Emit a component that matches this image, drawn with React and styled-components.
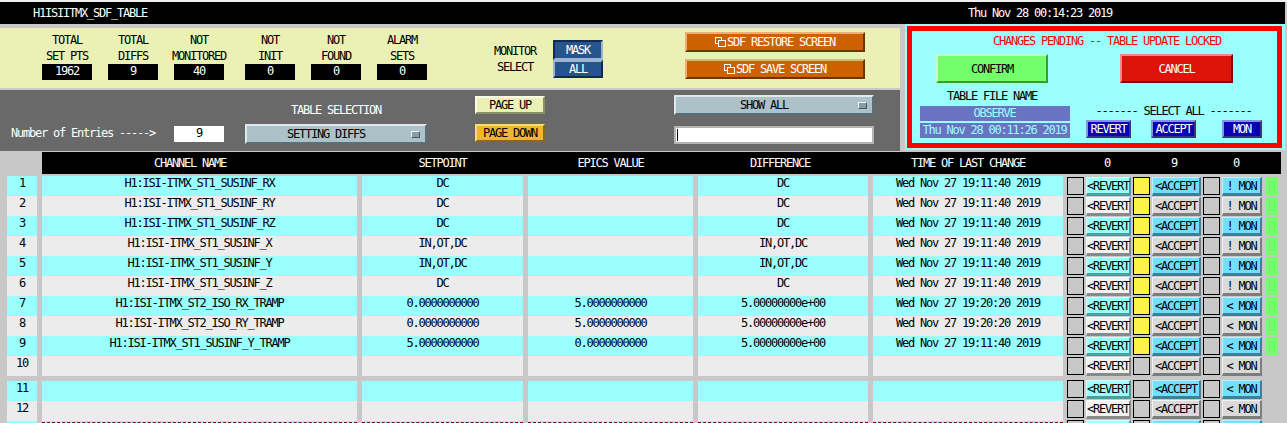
import React from "react";
import styled, { createGlobalStyle } from "styled-components";

const Global = createGlobalStyle`
  html, body { margin: 0; padding: 0; background: #c8c8c8; }
  body {
    width: 1287px; height: 423px; overflow: hidden;
    font-family: "DejaVu Sans Mono", "Liberation Mono", monospace;
    font-size: 12px; letter-spacing: -1.22px; line-height: 14px; color: #000;
  }
`;

const bevel = (lt, rb, w = 2) => `
  border-style: solid; border-width: ${w}px;
  border-color: ${lt} ${rb} ${rb} ${lt};
`;

const Page = styled.div`
  width: 1287px; height: 423px; overflow: hidden; box-sizing: border-box;
  padding-top: 2px;
  background: linear-gradient(#f0f0f0 2px, #c8c8c8 2px);
`;
const TitleBar = styled.div`
  width: 1285px; height: 22px; background: #000; color: #fff;
  display: grid; grid-template-columns: 33px 935px auto; align-items: center;
  box-sizing: border-box;
`;
const TitleText = styled.span`grid-column: 2;`;
const Clock = styled.span``;

const TopArea = styled.div`display: grid; grid-template-columns: 900px 5px 380px; height: 127px;`;
const LeftColumn = styled.div`display: flex; flex-direction: column; padding-top: 4px; box-sizing: border-box;`;
const Gutter = styled.div``;

const YellowPanel = styled.div`
  height: 60px; background: #ebf1b5; display: flex; align-items: flex-start;
  padding-left: 42px; box-sizing: border-box;
`;
const StatGroup = styled.div`display: flex; gap: 16px; margin-left: ${p => p.$ml || 0}px; padding-top: 5px;`;
const Stat = styled.div`width: 50px; display: flex; flex-direction: column; align-items: center; white-space: nowrap;`;
const StatLabel = styled.div`height: 16px; line-height: 15px;`;
const StatValue = styled.div`
  width: 50px; height: 16px; margin-top: -1px; background: #000; color: #fff;
  text-align: center; line-height: 15px;
`;
const MonitorWrap = styled.div`display: flex; margin-left: 66px; margin-top: 12px; gap: 16px;`;
const MonitorLabel = styled.div`width: 44px; text-align: center; line-height: 16px; padding-top: 3px;`;
const MaskStack = styled.div`display: flex; flex-direction: column; width: 50px;`;
const MaskButton = styled.div`
  height: ${p => p.$h}px; box-sizing: border-box; background: #27548d; color: #fff;
  display: flex; align-items: center; justify-content: center;
  ${p => p.$down ? bevel("#0f2b52", "#9db4d0") : bevel("#9db4d0", "#0f2b52")}
`;
const OrangeStack = styled.div`display: flex; flex-direction: column; gap: 7px; margin-left: 82px; margin-top: 4px;`;
const OrangeButton = styled.div`
  width: 180px; height: 20px; box-sizing: border-box; background: #cd6100; color: #fff;
  display: flex; align-items: center; justify-content: center;
  ${bevel("#eeb07a", "#6e3400")}
`;

const DarkPanel = styled.div`
  margin-top: 2px; height: 61px; background: #696969; box-sizing: border-box; color: #fff;
  display: grid; grid-template-columns: 11px 163px 50px 21px 182px 48px 70px 129px 200px;
  grid-template-rows: 6px 18px 10px 18px;
`;
const EntriesLabel = styled.div`grid-column: 2; grid-row: 4; white-space: nowrap; align-self: center;`;
const EntriesValue = styled.div`
  grid-column: 3; grid-row: 4; height: 16px; margin-top: 2px; background: #fff; color: #000;
  text-align: center; line-height: 15px;
`;
const TableLabel = styled.div`grid-column: 5; grid-row: 2 / 4; text-align: center; padding-top: 7px;`;
const Dropdown = styled.div`
  grid-column: ${p => p.$col}; grid-row: ${p => p.$row}; align-self: ${p => p.$top ? "start" : "stretch"};
  height: 20px; margin-top: ${p => p.$mt || 0}px; box-sizing: border-box; background: #adc1c8; color: #000;
  display: grid; grid-template-columns: 1fr 9px; align-items: center; column-gap: 6px; padding-right: 5px;
  ${bevel("#dfe8ec", "#5b6f78")}
  text-align: center;
`;
const DropMark = styled.span`
  display: block; width: 9px; height: 7px; box-sizing: border-box; background: #8a9ba2;
  ${bevel("#f0f4f5", "#4a5a60", 1)}
`;
const PageButton = styled.div`
  grid-column: 7; grid-row: ${p => p.$row}; height: 18px; box-sizing: border-box; color: #000;
  background: ${p => p.$bg}; display: flex; align-items: center; justify-content: center;
  ${p => bevel(p.$lt, p.$rb)}
`;
const TextField = styled.div`
  grid-column: 9; grid-row: 4; height: 18px; margin-top: 2px; box-sizing: border-box; background: #fff;
  border: 2px solid #b4b4b4; display: flex; align-items: center;
`;
const Caret = styled.span`display: block; width: 1px; height: 12px; margin-left: 1px; background: #000;`;

const CyanPanel = styled.div`background: #99ffff; padding: 2px 3px 2px 2px; box-sizing: border-box; height: 126px;`;
const RedBox = styled.div`
  border: 5px solid #fd0000; height: 122px; box-sizing: border-box;
  display: grid; grid-template-columns: 165px 1fr; grid-template-rows: 23px 29px 1fr;
`;
const Alert = styled.div`grid-column: 1 / 3; color: #fd0000; text-align: center; padding: 3px 0 0 25px;`;
const ActionButton = styled.div`
  justify-self: start; width: ${p => p.$w}px; margin-left: ${p => p.$ml}px; height: 29px; box-sizing: border-box;
  display: flex; align-items: center; justify-content: center;
  background: ${p => p.$bg}; color: ${p => p.$fg};
  ${p => bevel(p.$lt, p.$rb)}
`;
const FileBlock = styled.div`display: flex; flex-direction: column; align-items: center; padding-top: 6px;`;
const FileLabel = styled.div`height: 17px; padding-right: 5px;`;
const FileBox = styled.div`
  width: 150px; height: 15px; margin-bottom: 2px; background: #6a73c1; color: #99ffff;
  text-align: center; line-height: 14px; white-space: nowrap;
`;
const SelectBlock = styled.div`display: flex; flex-direction: column; padding-top: 18px; padding-left: 9px;`;
const SelectTitle = styled.div`width: 175px; text-align: center; height: 17px; white-space: nowrap; line-height: 20px;`;
const SelectRow = styled.div`display: flex; margin-top: 2px;`;
const BlueButton = styled.div`
  width: ${p => p.$w}px; height: 18px; margin-right: ${p => p.$mr || 0}px; box-sizing: border-box;
  background: #0a00b8; color: #fff; display: flex; align-items: center; justify-content: center;
  ${bevel("#8793e2", "#343386")}
`;

const HeaderRow = styled.div`
  margin: 1px 6px 2px 42px; height: 22px; background: #000; color: #fff;
  display: grid; grid-template-columns: 315px 5px 161px 5px 165px 5px 170px 5px 194px 80px 54px 70px 10px;
  align-items: center; text-align: center;
`;
const HeaderCell = styled.div`
  grid-column: ${p => p.$col}; padding-right: ${p => p.$pr || 0}px; white-space: nowrap;
  ${p => p.$pl ? `text-align: left; padding-left: ${p.$pl}px;` : ""}
`;

const Table = styled.div`display: flex; flex-direction: column;`;
const Row = styled.div`
  height: 20px; flex: none; margin-top: ${p => p.$mt || 0}px; padding-left: 7px;
  display: grid; grid-template-columns: 30px 315px 161px 165px 170px 190px 1fr; column-gap: 5px;
`;
const Cell = styled.div`
  position: relative; background: ${p => p.$alt ? "#99ffff" : "#ececec"}; text-align: center; white-space: nowrap;
  ${p => p.$dash && `
    &::after { content: ""; position: absolute; left: 0; right: 0; top: 1px; border-top: 1px dashed #820400; }
  `}
`;
const Widgets = styled.div`
  display: flex; margin: ${p => p.$up ? -2 : 0}px 0 0 -1px; gap: 2px; align-items: flex-start;
`;
const Indicator = styled.div`
  width: 17px; height: 18px; margin-top: 1px; box-sizing: border-box; border: 1px solid #000;
  background: ${p => p.$on ? "#fbf34a" : "#c8c8c8"};
`;
const tones = {
  revert: { true: ["#99ffff", "#d5ffff", "#4f9a9a"], false: ["#f2f2f2", "#ffffff", "#8a8a8a"] },
  accept: { true: ["#73dfff", "#bcefff", "#3e8098"], false: ["#dadada", "#f2f2f2", "#7d7d7d"] },
};
const RowButton = styled.div`
  width: ${p => p.$w}px; height: 19px; margin-top: 1px; box-sizing: border-box; flex: none;
  display: flex; align-items: center; justify-content: center; white-space: pre;
  background: ${p => tones[p.$tone][p.$alt][0]};
  border-style: solid; border-width: 1px 2px 3px 1px;
  border-color: ${p => `${tones[p.$tone][p.$alt][1]} ${tones[p.$tone][p.$alt][2]} ${tones[p.$tone][p.$alt][2]} ${tones[p.$tone][p.$alt][1]}`};
  line-height: 14px; padding-top: 1px;
`;
const GreenLight = styled.div`width: 12px; height: 18px; margin: 1px 0 0 2px; background: ${p => p.$on ? "#73ff6b" : "transparent"};`;

const CopyIcon = () => (
  <svg width="11" height="10" viewBox="0 0 11 10" fill="none" stroke="#fff" strokeWidth="1" shapeRendering="crispEdges" style={{ flex: "none", marginRight: 1 }}>
    <rect x="0.5" y="0.5" width="6" height="6" />
    <rect x="3.5" y="3.5" width="6.5" height="6" fill="#cd6100" />
  </svg>
);

const stats = [["TOTAL", "SET PTS", "1962"], ["TOTAL", "DIFFS", "9"], ["NOT", "MONITORED", "40"]];
const stats2 = [["NOT", "INIT", "0"], ["NOT", "FOUND", "0"], ["ALARM", "SETS", "0"]];

const S1 = "H1:ISI-ITMX_ST1_SUSINF_";
const WHEN1 = "Wed Nov 27 19:11:40 2019";
const WHEN2 = "Wed Nov 27 19:20:20 2019";
const rows = [
  [S1 + "RX", "DC", "", "DC", WHEN1, "! MON"],
  [S1 + "RY", "DC", "", "DC", WHEN1, "! MON"],
  [S1 + "RZ", "DC", "", "DC", WHEN1, "! MON"],
  [S1 + "X", "IN,OT,DC", "", "IN,OT,DC", WHEN1, "! MON"],
  [S1 + "Y", "IN,OT,DC", "", "IN,OT,DC", WHEN1, "! MON"],
  [S1 + "Z", "DC", "", "DC", WHEN1, "! MON"],
  ["H1:ISI-ITMX_ST2_ISO_RX_TRAMP", "0.0000000000", "5.0000000000", "5.00000000e+00", WHEN2, "< MON"],
  ["H1:ISI-ITMX_ST2_ISO_RY_TRAMP", "0.0000000000", "5.0000000000", "5.00000000e+00", WHEN2, "< MON"],
  [S1 + "Y_TRAMP", "5.0000000000", "0.0000000000", "5.00000000e+00", WHEN1, "< MON"],
  ["", "", "", "", "", "< MON"],
  ["", "", "", "", "", "< MON"],
  ["", "", "", "", "", "< MON"],
  ["", "", "", "", "", ""],
];

export default function App() {
  return (
    <Page>
      <Global />
      <TitleBar>
        <TitleText>H1ISIITMX_SDF_TABLE</TitleText>
        <Clock>Thu Nov 28 00:14:23 2019</Clock>
      </TitleBar>
      <TopArea>
        <LeftColumn>
          <YellowPanel>
            <StatGroup>
              {stats.map(s => (
                <Stat key={s[1]}><StatLabel>{s[0]}</StatLabel><StatLabel>{s[1]}</StatLabel><StatValue>{s[2]}</StatValue></Stat>
              ))}
            </StatGroup>
            <StatGroup $ml={21}>
              {stats2.map(s => (
                <Stat key={s[1]}><StatLabel>{s[0]}</StatLabel><StatLabel>{s[1]}</StatLabel><StatValue>{s[2]}</StatValue></Stat>
              ))}
            </StatGroup>
            <MonitorWrap>
              <MonitorLabel>MONITOR<br />SELECT</MonitorLabel>
              <MaskStack>
                <MaskButton $h={20} $down>MASK</MaskButton>
                <MaskButton $h={18}>ALL</MaskButton>
              </MaskStack>
            </MonitorWrap>
            <OrangeStack>
              <OrangeButton><CopyIcon />SDF RESTORE SCREEN</OrangeButton>
              <OrangeButton><CopyIcon />SDF SAVE SCREEN</OrangeButton>
            </OrangeStack>
          </YellowPanel>
          <DarkPanel>
            <EntriesLabel>Number of Entries -----&gt;</EntriesLabel>
            <EntriesValue>9</EntriesValue>
            <TableLabel>TABLE SELECTION</TableLabel>
            <Dropdown $col={5} $row={4}><span>SETTING DIFFS</span><DropMark /></Dropdown>
            <PageButton $row={2} $bg="#ebf1b5" $lt="#fafce8" $rb="#8b8f64">PAGE UP</PageButton>
            <PageButton $row={4} $bg="#eeb62b" $lt="#f9da7c" $rb="#8a6a14">PAGE DOWN</PageButton>
            <Dropdown $col={9} $row={2} $top $mt={-1}><span>SHOW ALL</span><DropMark /></Dropdown>
            <TextField><Caret /></TextField>
          </DarkPanel>
        </LeftColumn>
        <Gutter />
        <CyanPanel>
          <RedBox>
            <Alert>CHANGES PENDING -- TABLE UPDATE LOCKED</Alert>
            <ActionButton $w={112} $ml={24} $bg="#73ff6b" $fg="#000" $lt="#c4ffc0" $rb="#3c9a36">CONFIRM</ActionButton>
            <ActionButton $w={113} $ml={43} $bg="#de1309" $fg="#fff" $lt="#f08a85" $rb="#820400">CANCEL</ActionButton>
            <FileBlock>
              <FileLabel>TABLE FILE NAME</FileLabel>
              <FileBox>OBSERVE</FileBox>
              <FileBox>Thu Nov 28 00:11:26 2019</FileBox>
            </FileBlock>
            <SelectBlock>
              <SelectTitle>------- SELECT ALL -------</SelectTitle>
              <SelectRow>
                <BlueButton $w={45} $mr={20}>REVERT</BlueButton>
                <BlueButton $w={45} $mr={26}>ACCEPT</BlueButton>
                <BlueButton $w={40}>MON</BlueButton>
              </SelectRow>
            </SelectBlock>
          </RedBox>
        </CyanPanel>
      </TopArea>
      <HeaderRow>
        <HeaderCell $col={1} $pr={19}>CHANNEL NAME</HeaderCell>
        <HeaderCell $col={3}>SETPOINT</HeaderCell>
        <HeaderCell $col={5}>EPICS VALUE</HeaderCell>
        <HeaderCell $col={7} $pr={6}>DIFFERENCE</HeaderCell>
        <HeaderCell $col={9} $pl={38}>TIME OF LAST CHANGE</HeaderCell>
        <HeaderCell $col={10}>0</HeaderCell>
        <HeaderCell $col={11}>9</HeaderCell>
        <HeaderCell $col={12}>0</HeaderCell>
      </HeaderRow>
      <Table>
        {rows.map((r, i) => {
          const alt = i % 2 === 0;
          const on = i < 9;
          const dash = i === 12;
          const label = i < 12;
          return (
            <Row key={i} $mt={i === 10 ? 5 : 0}>
              <Cell $alt={alt}>{label ? i + 1 : ""}</Cell>
              {r.slice(0, 5).map((t, k) => <Cell key={k} $alt={alt} $dash={dash}>{t}</Cell>)}
              <Widgets $up={i >= 10}>
                <Indicator />
                <RowButton $w={45} $tone="revert" $alt={alt}>{label ? "<REVERT" : ""}</RowButton>
                <Indicator $on={on} />
                <RowButton $w={49} $tone="accept" $alt={alt}>{label ? "<ACCEPT" : ""}</RowButton>
                <Indicator />
                <RowButton $w={40} $tone="accept" $alt={alt}>{r[5]}</RowButton>
                <GreenLight $on={on} />
              </Widgets>
            </Row>
          );
        })}
      </Table>
    </Page>
  );
}
